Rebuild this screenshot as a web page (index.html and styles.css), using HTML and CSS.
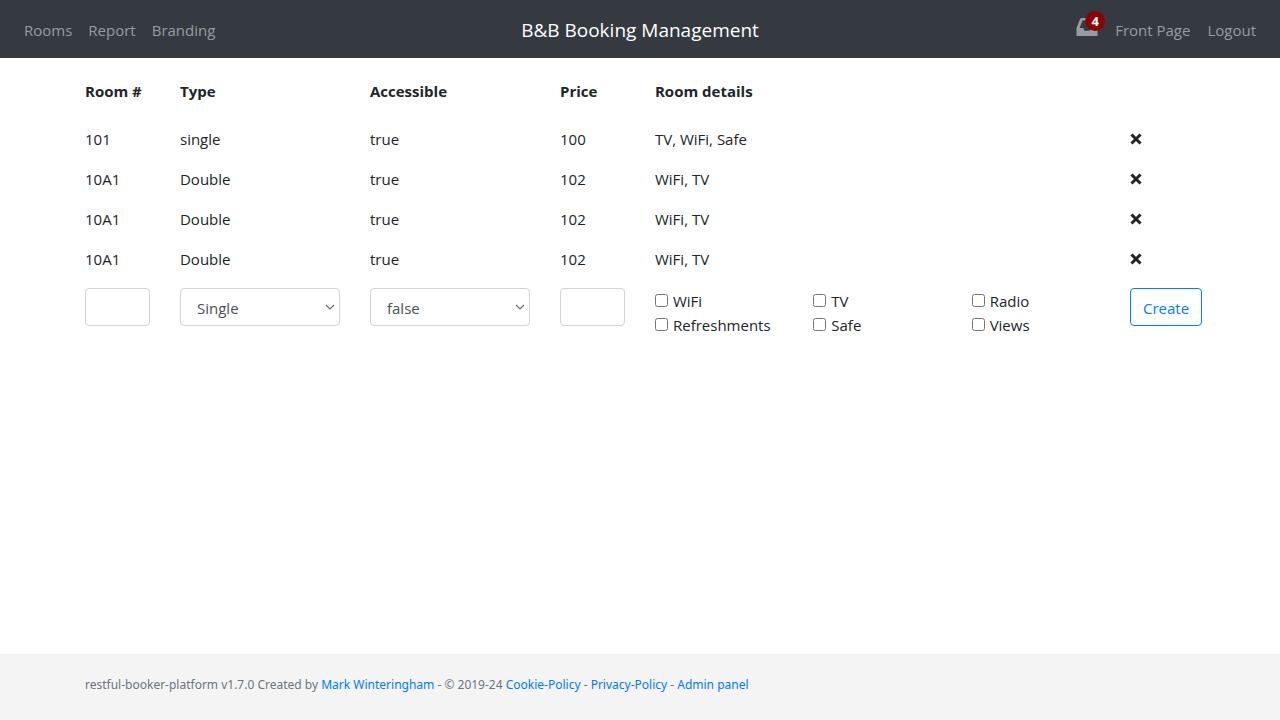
FILE: index.html
```html
<!DOCTYPE html>
<html lang="en">
<head>
<meta charset="utf-8">
<meta name="viewport" content="width=device-width, initial-scale=1">
<title>B&amp;B Booking Management</title>
<link rel="stylesheet" href="styles.css">
</head>
<body>
<nav class="navbar">
  <ul class="nav-list">
    <li><a class="nav-link" href="#rooms">Rooms</a></li>
    <li><a class="nav-link" href="#report">Report</a></li>
    <li><a class="nav-link" href="#branding">Branding</a></li>
  </ul>
  <a class="brand" href="#rooms">B&amp;B Booking Management</a>
  <ul class="nav-list nav-right">
    <li><a class="nav-link inbox" href="#messages" aria-label="Messages">
      <svg class="inbox-icon" viewBox="0 0 22 18" aria-hidden="true"><path fill="currentColor" fill-rule="evenodd" d="M4 1.200 Q4.500 0 5.700 0 H16.300 Q17.500 0 18 1.200 L21.500 10 V18 H0.500 V10 Z M6.500 2.600 L3.600 10 H7.200 L8.500 12.800 H13.500 L14.800 10 H18.400 L15.500 2.600 Z"/></svg>
      <span class="badge">4</span></a></li>
    <li><a class="nav-link" href="#front">Front Page</a></li>
    <li><a class="nav-link" href="#logout">Logout</a></li>
  </ul>
</nav>

<main class="container">
  <form>
    <table class="rooms">
      <colgroup>
        <col class="col-1"><col class="col-2"><col class="col-2"><col class="col-1"><col class="col-5"><col class="col-1">
      </colgroup>
      <thead>
        <tr><th scope="col">Room #</th><th scope="col">Type</th><th scope="col">Accessible</th><th scope="col">Price</th><th scope="col">Room details</th><td></td></tr>
      </thead>
      <tbody>
        <tr><td>101</td><td>single</td><td>true</td><td>100</td><td>TV, WiFi, Safe</td><td><button class="remove" type="button" aria-label="Delete room 101"><svg viewBox="0 0 12 12" aria-hidden="true"><path d="M2.500 2.500 9.500 9.500M9.500 2.500 2.500 9.500"/></svg></button></td></tr>
        <tr><td>10A1</td><td>Double</td><td>true</td><td>102</td><td>WiFi, TV</td><td><button class="remove" type="button" aria-label="Delete room 10A1"><svg viewBox="0 0 12 12" aria-hidden="true"><path d="M2.500 2.500 9.500 9.500M9.500 2.500 2.500 9.500"/></svg></button></td></tr>
        <tr><td>10A1</td><td>Double</td><td>true</td><td>102</td><td>WiFi, TV</td><td><button class="remove" type="button" aria-label="Delete room 10A1"><svg viewBox="0 0 12 12" aria-hidden="true"><path d="M2.500 2.500 9.500 9.500M9.500 2.500 2.500 9.500"/></svg></button></td></tr>
        <tr><td>10A1</td><td>Double</td><td>true</td><td>102</td><td>WiFi, TV</td><td><button class="remove" type="button" aria-label="Delete room 10A1"><svg viewBox="0 0 12 12" aria-hidden="true"><path d="M2.500 2.500 9.500 9.500M9.500 2.500 2.500 9.500"/></svg></button></td></tr>
      </tbody>
      <tfoot>
        <tr>
          <td><input class="field" type="text" aria-label="Room number"></td>
          <td><select class="field select" aria-label="Type"><option>Single</option><option>Twin</option><option>Double</option><option>Family</option><option>Suite</option></select></td>
          <td><select class="field select" aria-label="Accessible"><option>false</option><option>true</option></select></td>
          <td><input class="field" type="text" aria-label="Price"></td>
          <td>
            <div class="features">
              <label class="check"><input type="checkbox">WiFi</label>
              <label class="check"><input type="checkbox">TV</label>
              <label class="check"><input type="checkbox">Radio</label>
              <label class="check"><input type="checkbox">Refreshments</label>
              <label class="check"><input type="checkbox">Safe</label>
              <label class="check"><input type="checkbox">Views</label>
            </div>
          </td>
          <td><button class="create" type="button">Create</button></td>
        </tr>
      </tfoot>
    </table>
  </form>
</main>

<footer class="footer">
  <p class="container footer-text">restful-booker-platform v1.7.0 Created by <a href="#author">Mark Winteringham</a> - © 2019-24 <a href="#cookie">Cookie-Policy</a> - <a href="#privacy">Privacy-Policy</a> - <a href="#admin">Admin panel</a></p>
</footer>
</body>
</html>
```
FILE: styles.css
```css
*, *::before, *::after { box-sizing: border-box; }

body {
  margin: 0;
  min-height: 100vh;
  display: flex;
  flex-direction: column;
  font: 15px/24px "Segoe UI", "Open Sans", "Noto Sans", sans-serif;
  color: #212529;
  background: #fff;
}

a { color: #007bff; text-decoration: none; }

.navbar {
  display: grid;
  grid-template-columns: 1fr auto 1fr;
  align-items: center;
  min-height: 58px;
  padding: 10px 24px 8px;
  background: #343a40;
}
.nav-list {
  display: flex;
  gap: 16px;
  margin: 0;
  padding: 0;
  list-style: none;
}
.nav-right { justify-content: flex-end; gap: 17px; }
.nav-link { display: block; color: #999c9f; }
.brand { color: #fff; font-size: 19px; line-height: 30px; }

.inbox { position: relative; width: 22px; height: 24px; }
.inbox-icon { display: block; width: 22px; height: 18px; }
.badge {
  position: absolute;
  top: -7px;
  left: 9px;
  width: 20px;
  height: 20px;
  border-radius: 50%;
  background: #8b0000;
  color: #fff;
  font-size: 13px;
  font-weight: 700;
  line-height: 20px;
  text-align: center;
}

.container {
  width: 100%;
  max-width: 1140px;
  margin: 0 auto;
}
main.container { flex: 1; padding-top: 21px; }

.rooms {
  width: 100%;
  table-layout: fixed;
  border-collapse: collapse;
}
.col-1 { width: 8.3333%; }
.col-2 { width: 16.6667%; }
.col-5 { width: 41.6667%; }
.rooms th, .rooms td {
  padding: 8px 15px;
  text-align: left;
  vertical-align: top;
  white-space: nowrap;
}
.rooms th { padding: 0 15px 16px; }
.rooms thead td { padding: 0; }
.rooms tfoot td { padding-top: 9px; }

.remove {
  display: flex;
  align-items: center;
  height: 24px;
  padding: 0;
  border: 0;
  background: none;
  color: inherit;
  cursor: pointer;
}
.remove svg {
  width: 12px;
  height: 12px;
  fill: none;
  stroke: currentColor;
  stroke-width: 3;
  stroke-linecap: square;
}

.field {
  display: block;
  width: 100%;
  height: 38px;
  padding: 6px 12px;
  border: 1px solid #ced4da;
  border-radius: 4px;
  background: #fff;
  color: #495057;
  font: inherit;
}
.select {
  appearance: none;
  padding: 7px 16px 5px;
  background: #fff url("data:image/svg+xml,%3Csvg xmlns='http://www.w3.org/2000/svg' viewBox='0 0 10 6'%3E%3Cpath d='M1 1l4 4 4-4' fill='none' stroke='%23676d73' stroke-width='1.2'/%3E%3C/svg%3E") no-repeat right 4px center / 10px 6px;
}

.features {
  display: grid;
  grid-template-columns: repeat(3, 1fr);
  margin: 0 -15px;
  padding-top: 1px;
}
.check {
  display: flex;
  gap: 5px;
  padding: 0 15px;
}
.check input { width: 13px; height: 13px; margin: 5px 0 0; }

.create {
  height: 38px;
  padding: 7px 12px 5px;
  border: 1px solid #007bff;
  border-radius: 4px;
  background: none;
  color: #007bff;
  font: inherit;
  cursor: pointer;
}

.footer { background: #f4f4f4; padding: 21px 0 25px; }
.footer-text {
  padding: 0 15px;
  color: #6c757d;
  font-family: "Segoe UI", "Noto Sans", "Open Sans", sans-serif;
  font-size: 12px;
  line-height: 20px;
}
```
